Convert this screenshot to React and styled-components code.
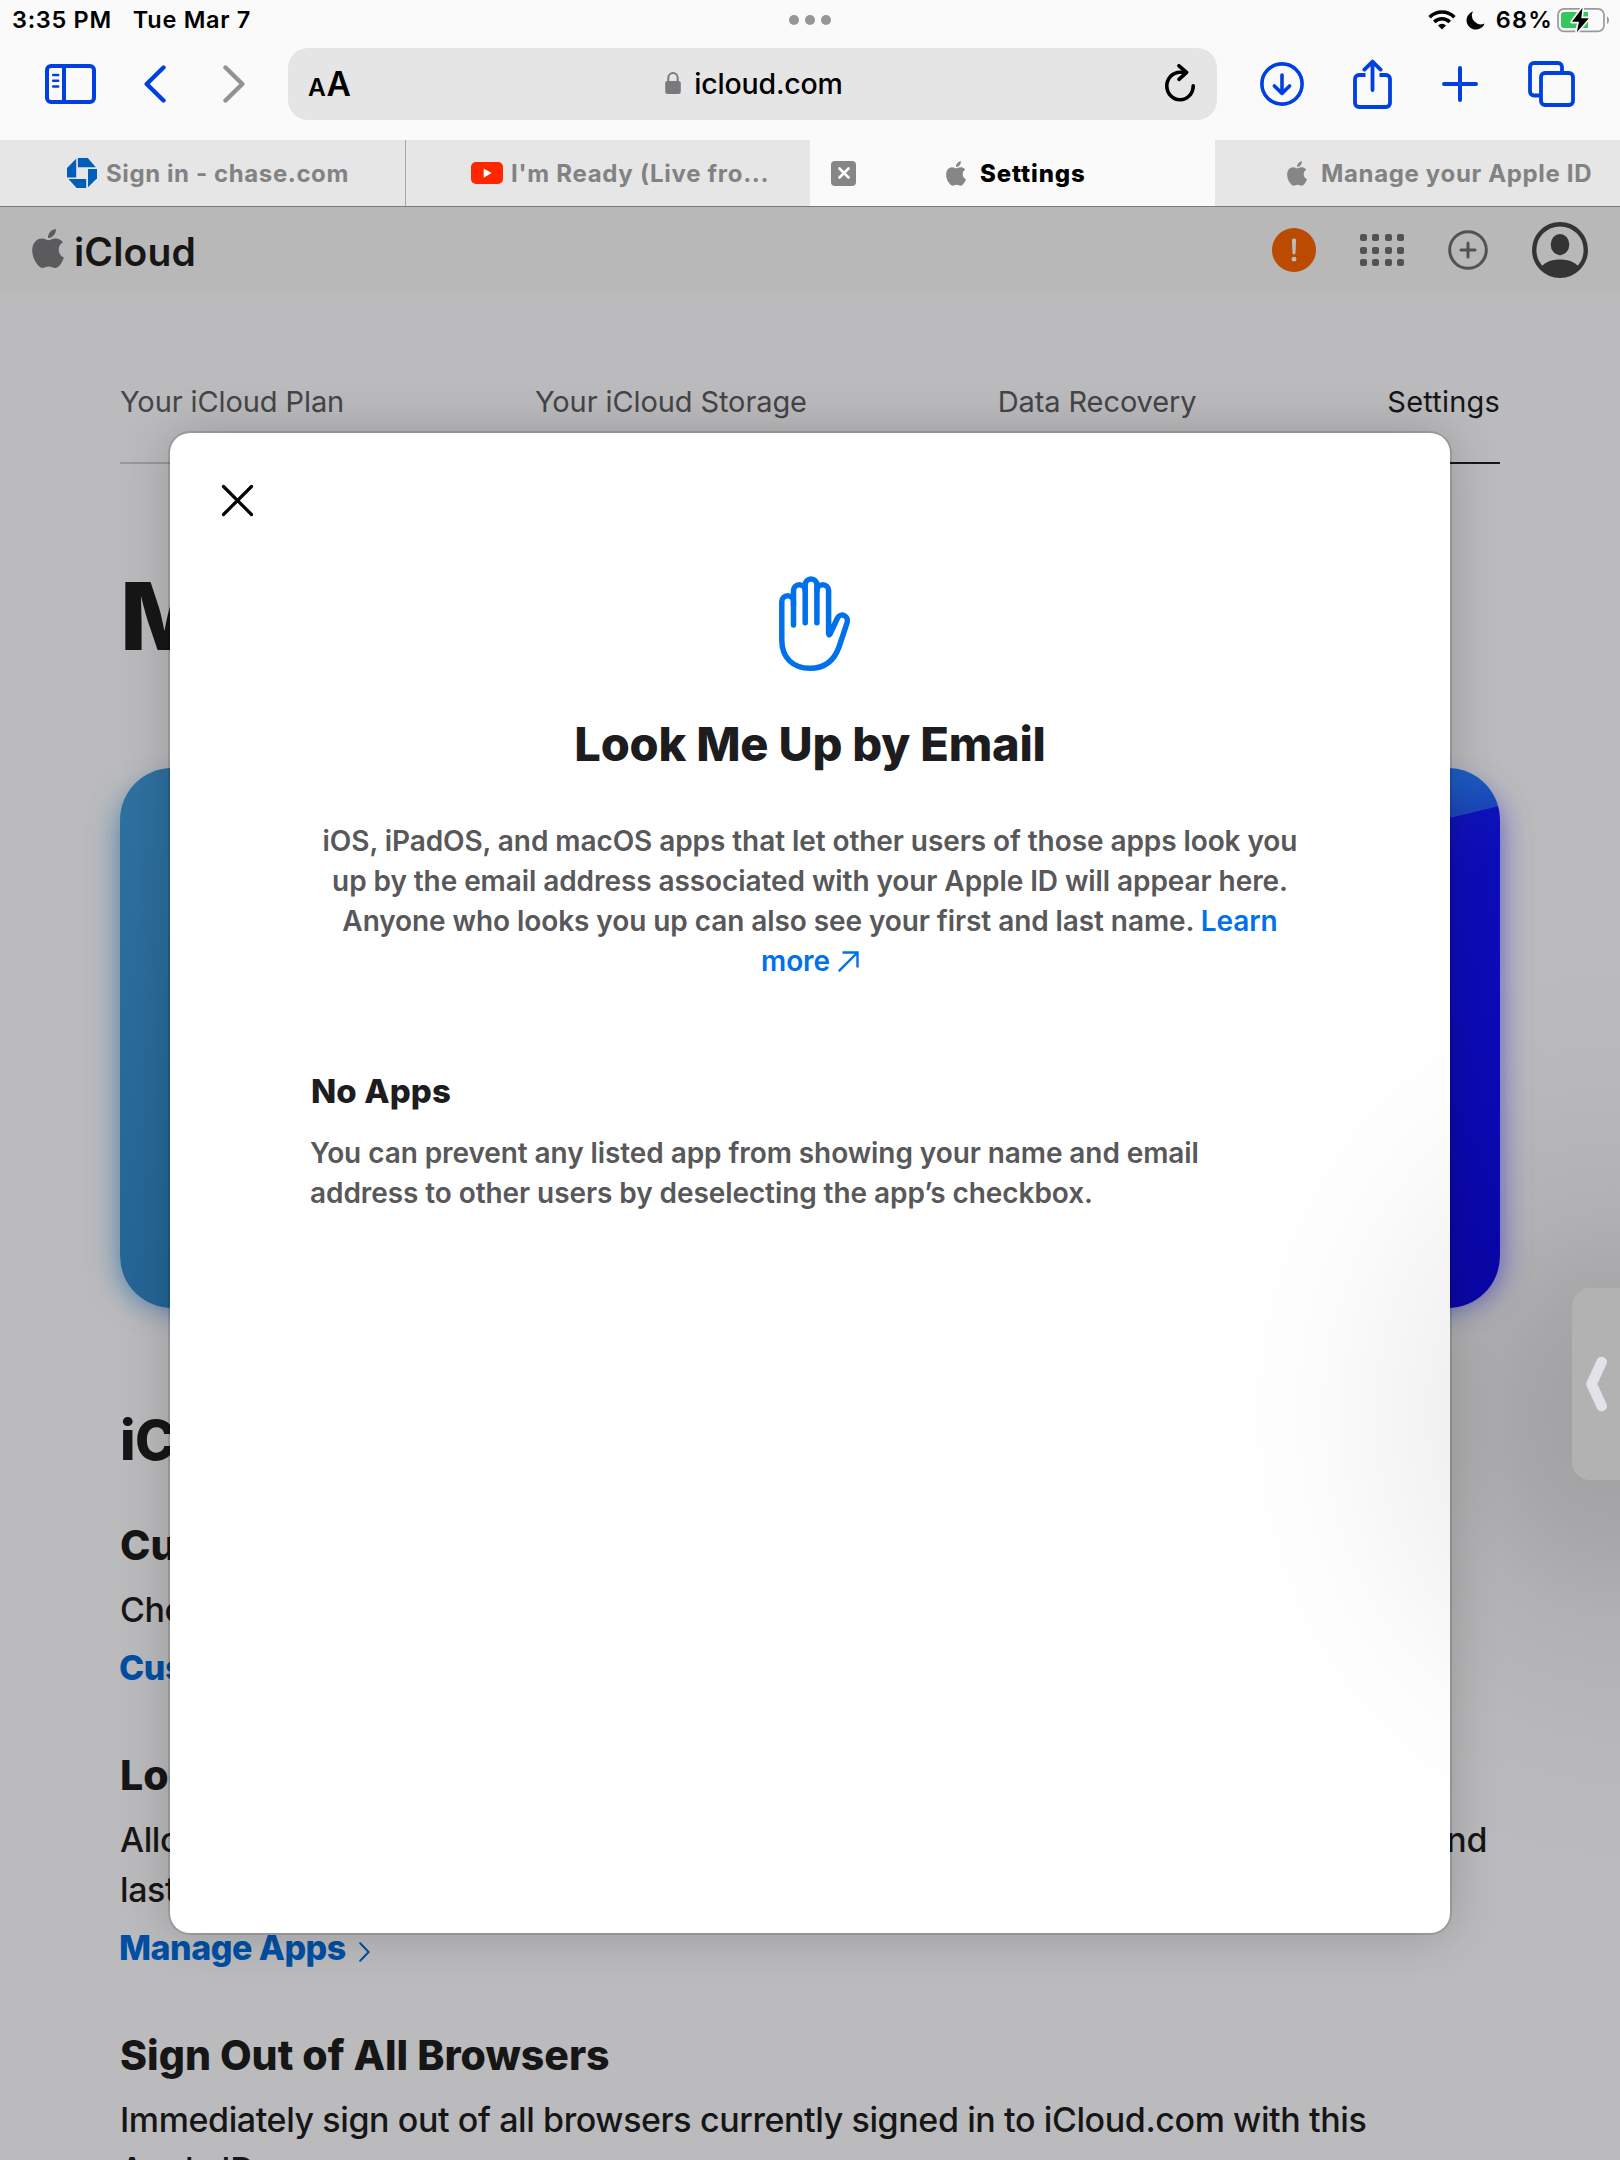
import React from "react";
import styled, { createGlobalStyle } from "styled-components";

const BLUE = "#0040e0";

const GlobalStyle = createGlobalStyle`
  *, *::before, *::after { box-sizing: border-box; }
  body {
    margin: 0;
    background: #bbbbbd;
    font-family: Inter, "Liberation Sans", sans-serif;
    color: #161617;
  }
  h1, h2, h3, p, ul { margin: 0; padding: 0; }
  svg { display: block; flex: none; }
`;

const Screen = styled.div`
  position: relative;
  width: 1620px;
  height: 2160px;
  overflow: hidden;
  display: flex;
  flex-direction: column;
`;

/* ---------- browser chrome ---------- */

const Chrome = styled.header`
  flex: none;
  height: 207px;
  background: #fafafa;
  border-bottom: 1px solid #7b7b7b;
`;

const StatusBar = styled.div`
  display: grid;
  grid-template-columns: 1fr auto 1fr;
  align-items: center;
  height: 40px;
  padding: 0 9px 0 12px;
`;

const StatusText = styled.span`
  font-size: 23.5px;
  font-weight: 600;
  line-height: 40px;
  color: #000;
  white-space: nowrap;
  letter-spacing: ${(p) => p.$track || 0.7}px;
`;

const StatusLeft = styled.div`
  display: flex;
  gap: 21px;
`;

const StatusRight = styled.div`
  display: flex;
  justify-content: flex-end;
  align-items: center;
`;

const Dots = styled.div`
  display: flex;
  gap: 6px;
  margin-left: -4px;
`;

const Dot = styled.i`
  width: 10px;
  height: 10px;
  border-radius: 50%;
  background: #969696;
`;

const Toolbar = styled.div`
  display: flex;
  align-items: flex-start;
  height: 100px;
  padding: 8px 45px 0;
`;

const ToolGroup = styled.div`
  display: flex;
  align-items: center;
  height: 72px;
`;

const ToolButton = styled.button`
  border: 0;
  padding: 0;
  background: none;
  color: ${(p) => p.$color || BLUE};
  margin-left: ${(p) => p.$gap || 0}px;
`;

const AddressBar = styled.div`
  flex: none;
  display: grid;
  grid-template-columns: 1fr auto 1fr;
  align-items: start;
  width: 929px;
  height: 72px;
  margin-left: 43px;
  padding: 0 22px 0 20px;
  border-radius: 20px;
  background: #e5e5e5;
`;

const TextSize = styled.div`
  color: #000;
  font-size: 33.5px;
  font-weight: 600;
  line-height: 73px;
  letter-spacing: -0.3px;
  small { font-size: 24.5px; margin-right: 1px; }
`;

const Host = styled.div`
  display: flex;
  align-items: center;
  gap: 13px;
  margin-left: 5px;
  font-size: 28.5px;
  font-weight: 500;
  line-height: 72px;
  letter-spacing: -0.2px;
  color: #000;
  svg { margin-bottom: 3px; }
`;

const ReloadSlot = styled.div`
  display: flex;
  justify-content: flex-end;
  padding-top: 16px;
`;

const TabStrip = styled.div`
  display: grid;
  grid-template-columns: repeat(4, 405px);
  height: 66px;
`;

const Tab = styled.div`
  display: flex;
  align-items: center;
  height: 66px;
  padding-left: ${(p) => p.$inset}px;
  background: ${(p) => (p.$active ? "#fafafa" : "#e6e6e6")};
  color: ${(p) => (p.$active ? "#000" : "#828284")};
  border-left: ${(p) => (p.$divider ? "1px solid #a9a9a9" : "0")};
`;

const TabTitle = styled.span`
  padding-top: 1px;
  font-size: 24px;
  font-weight: ${(p) => p.$weight || 700};
  line-height: 66px;
  white-space: nowrap;
  margin-left: ${(p) => p.$gap}px;
  letter-spacing: ${(p) => p.$track || 0.6}px;
`;

const CloseTab = styled.span`
  display: flex;
  align-items: center;
  justify-content: center;
  width: 25px;
  height: 25px;
  margin-right: 90px;
  border-radius: 4px;
  background: #868686;
`;

/* ---------- iCloud page ---------- */

const SiteHeader = styled.div`
  flex: none;
  display: flex;
  align-items: center;
  height: 86px;
  padding: 0 32px;
  background: #b8b8b8;
`;

const Brand = styled.div`
  display: flex;
  align-items: center;
  gap: 10px;
  margin-right: auto;
  padding-top: 3px;
  font-size: 39px;
  font-weight: 600;
  line-height: 80px;
  letter-spacing: 0.15px;
  svg { margin-bottom: 6px; }
`;

const SiteActions = styled.div`
  display: flex;
  align-items: center;
`;

const Action = styled.span`
  margin-left: ${(p) => p.$gap}px;
`;

const Alert = styled.span`
  display: flex;
  align-items: center;
  justify-content: center;
  width: 44px;
  height: 44px;
  border-radius: 50%;
  background: #ba4b00;
`;

const AppGrid = styled.div`
  display: grid;
  grid-template-columns: repeat(4, 7px);
  gap: 5.5px;
  i { height: 7px; border-radius: 2px; background: #525252; }
`;

const Page = styled.main`
  width: 1380px;
  margin: 0 auto;
`;

const Nav = styled.ul`
  display: flex;
  justify-content: space-between;
  margin-top: 87px;
  border-bottom: 2px solid #98989a;
  list-style: none;
`;

const NavItem = styled.li`
  height: 84px;
  margin-bottom: -2px;
  font-size: 29px;
  font-weight: 400;
  line-height: 44px;
  letter-spacing: ${(p) => (p.$active ? "0.2px" : "-0.1px")};
  color: ${(p) => (p.$active ? "#161617" : "#454547")};
  border-bottom: 2px solid ${(p) => (p.$active ? "#161617" : "transparent")};
`;

const Hero = styled.h1`
  margin: 96px 0;
  font-size: 94px;
  font-weight: 800;
  line-height: 112px;
`;

const Card = styled.div`
  height: 540px;
  border-radius: 52px;
  background:
    linear-gradient(166.5deg, #1f62c4 0, #1d5cc2 45px, #1b46ba 83px, transparent 84px) right top / 200px 120px no-repeat,
    linear-gradient(165deg, #1726b8 0%, #0d0dba 38%, #0a06b0 100%) right / 50% 100% no-repeat,
    linear-gradient(180deg, #2f71a0 0%, #246595 100%);
  box-shadow: -14px 8px 32px -16px rgba(20, 100, 160, 0.75), 14px 8px 32px -16px rgba(60, 50, 200, 0.8);
`;

const Section = styled.h2`
  margin: 100px 0 48px;
  font-size: 55px;
  font-weight: 800;
  line-height: 64px;
  letter-spacing: -0.5px;
`;

const Block = styled.section`
  margin-bottom: 62px;
  color: #161617;
`;

const BlockTitle = styled.h3`
  font-size: 41px;
  font-weight: 800;
  line-height: 50px;
  letter-spacing: 0;
  margin-bottom: 15px;
`;

const BlockText = styled.p`
  font-size: 34px;
  font-weight: 500;
  line-height: 50px;
  letter-spacing: -0.4px;
`;

const FullLine = styled.span`
  display: block;
  padding-right: 13px;
  text-align-last: justify;
`;

const BlockLink = styled.a`
  display: flex;
  align-items: center;
  gap: 13px;
  height: 40px;
  margin: 13px 0 0 -1px;
  font-size: 34px;
  font-weight: 800;
  line-height: 40px;
  letter-spacing: -0.5px;
  color: #004fa3;
  svg { margin-top: 7px; }
`;

/* ---------- dialog ---------- */

const Dialog = styled.div`
  position: absolute;
  left: 170px;
  top: 433px;
  width: 1280px;
  height: 1500px;
  padding: 51px 140px 0;
  border-radius: 20px;
  background: #fff;
  box-shadow: 0 0 0 2px rgba(0, 0, 0, 0.12), 0 0 50px rgba(0, 0, 0, 0.2);
`;

const CloseButton = styled.button`
  display: block;
  margin-left: -89px;
  padding: 0;
  border: 0;
  background: none;
`;

const HandSlot = styled.div`
  display: flex;
  justify-content: center;
  margin: 58px 0 0 8px;
`;

const DialogTitle = styled.h2`
  margin-top: 42px;
  font-size: 47px;
  font-weight: 800;
  line-height: 60px;
  letter-spacing: -0.2px;
  text-align: center;
  color: #1d1d1f;
`;

const DialogText = styled.p`
  margin-top: ${(p) => p.$top}px;
  font-size: 28px;
  font-weight: 600;
  line-height: 40px;
  letter-spacing: -0.08px;
  color: #58585a;
  text-align: ${(p) => (p.$center ? "center" : "left")};
  white-space: nowrap;
`;

const LearnMore = styled.a`
  color: #0071eb;
  svg { display: inline-block; margin-left: 8px; vertical-align: -1px; }
`;

const DialogHeading = styled.h3`
  margin: 88px 0 0 1px;
  font-size: 33px;
  font-weight: 800;
  line-height: 44px;
  letter-spacing: 0.1px;
  color: #1d1d1f;
`;

/* ---------- side handle ---------- */

const Shade = styled.div`
  position: absolute;
  right: 0;
  top: 884px;
  width: 420px;
  height: 1000px;
  pointer-events: none;
  background: radial-gradient(
    ellipse 410px 470px at 100% 53%,
    rgba(0, 0, 0, 0.15) 0%,
    rgba(0, 0, 0, 0.11) 25%,
    rgba(0, 0, 0, 0.05) 45%,
    rgba(0, 0, 0, 0.012) 75%,
    rgba(0, 0, 0, 0) 100%
  );
`;

const Handle = styled.div`
  position: absolute;
  right: 0;
  top: 1288px;
  display: flex;
  align-items: center;
  width: 48px;
  height: 192px;
  padding-left: 14px;
  border-radius: 18px 0 0 18px;
  background: #b2b2b2;
`;

/* ---------- icons ---------- */

const Apple = ({ w, h, color }) => (
  <svg width={w} height={h} viewBox="2.1 0 19.7 24" fill={color}>
    <path d="M12.152 6.896c-.948 0-2.415-1.078-3.96-1.04-2.04.027-3.91 1.183-4.961 3.014-2.117 3.675-.546 9.103 1.519 12.09 1.013 1.454 2.208 3.09 3.792 3.039 1.52-.065 2.09-.987 3.935-.987 1.831 0 2.35.987 3.96.948 1.637-.026 2.676-1.48 3.676-2.948 1.156-1.688 1.636-3.325 1.662-3.415-.039-.013-3.182-1.221-3.22-4.857-.026-3.04 2.48-4.494 2.597-4.559-1.429-2.09-3.623-2.324-4.39-2.376-2-.156-3.675 1.09-4.61 1.09zM15.53 3.83c.843-1.012 1.4-2.427 1.245-3.83-1.207.052-2.662.805-3.532 1.818-.78.896-1.454 2.338-1.273 3.714 1.338.104 2.715-.688 3.559-1.701" />
  </svg>
);

const Stroke = ({ w, h, sw = 4, children }) => (
  <svg width={w} height={h} viewBox={`0 0 ${w} ${h}`} fill="none" stroke="currentColor" strokeWidth={sw} strokeLinecap="round" strokeLinejoin="round">
    {children}
  </svg>
);

const Wifi = () => (
  <svg width="28" height="20" viewBox="0 0 28 20" fill="none" stroke="#000" strokeWidth="3.6">
    <path d="M1.6 7.2a17.5 17.5 0 0 1 24.8 0" />
    <path d="M6.3 12a10.8 10.8 0 0 1 15.4 0" />
    <path d="M14 19.6l-4-4.2a5.8 5.8 0 0 1 8 0z" fill="#000" stroke="none" />
  </svg>
);

const Moon = () => (
  <svg width="19" height="19" viewBox="0 0 19 19">
    <path d="M7 .4A9.3 9.3 0 1 0 18.6 12.4 8.8 8.8 0 0 1 7 .4z" fill="#000" />
  </svg>
);

const Battery = () => (
  <svg width="54" height="26" viewBox="0 0 54 26">
    <rect x="1" y="1.8" width="46" height="22.6" rx="6" fill="none" stroke="#9a9a9a" strokeWidth="1.7" />
    <path d="M50 9.5c2.6.7 2.6 6.6 0 7.4z" fill="#9a9a9a" />
    <path d="M7 5h24v16H7a3 3 0 0 1-3-3V8a3 3 0 0 1 3-3z" fill="#34c759" />
    <path d="M25.5.8L15 14.8h7l-2.2 10.400 12-14h-7.500z" fill="#000" stroke="#fafafa" strokeWidth="3.400" strokeLinejoin="round" paintOrder="stroke" />
  </svg>
);

const Chase = () => (
  <svg width="30" height="30" viewBox="0 0 30 30" fill="#005eb8">
    <path d="M10.9 0h9.9l8 9.3H10.9z" />
    <path d="M30 10.9v9.4l-9 9V10.9z" />
    <path d="M19.2 30H9.6L1.5 21h17.7z" />
    <path d="M0 19.4V10L9.2.8v18.6z" />
  </svg>
);

const YouTube = () => (
  <svg width="32" height="22" viewBox="0 0 32 22">
    <rect width="32" height="22" rx="5" fill="#ff2600" />
    <path d="M12.7 6.4v9.4l8-4.7z" fill="#fff" />
  </svg>
);

const Lock = () => (
  <svg width="16" height="22" viewBox="0 0 16 22">
    <path d="M3.3 10V6a4.7 4.9 0 0 1 9.4 0v4" fill="none" stroke="#79797e" strokeWidth="2" />
    <rect x="0.2" y="9" width="15.6" height="13" rx="2.2" fill="#79797e" />
  </svg>
);

export default function App() {
  return (
    <Screen>
      <GlobalStyle />

      <Chrome>
        <StatusBar>
          <StatusLeft>
            <StatusText>3:35 PM</StatusText>
            <StatusText>Tue Mar 7</StatusText>
          </StatusLeft>
          <Dots><Dot /><Dot /><Dot /></Dots>
          <StatusRight>
            <Wifi />
            <Action $gap={10}><Moon /></Action>
            <Action $gap={11}><StatusText $track={1.2}>68%</StatusText></Action>
            <Action $gap={4}><Battery /></Action>
          </StatusRight>
        </StatusBar>

        <Toolbar>
          <ToolGroup>
            <ToolButton>
              <Stroke w={51} h={40}>
                <rect x="2" y="2" width="47" height="36" rx="4" />
                <path d="M19 2v36" strokeLinecap="butt" />
                <path d="M8.2 11h5M8.2 16.7h5M8.2 22.4h5" strokeWidth="2.5" />
              </Stroke>
            </ToolButton>
            <ToolButton $gap={48}>
              <Stroke w={22} h={38} sw={4.4}><path d="M19.5 2.5L2.7 19l16.8 16.5" /></Stroke>
            </ToolButton>
            <ToolButton $gap={57} $color="#929294">
              <Stroke w={22} h={38} sw={4.4}><path d="M2.5 2.5L19.3 19 2.5 35.5" /></Stroke>
            </ToolButton>
          </ToolGroup>

          <AddressBar>
            <TextSize><small>A</small>A</TextSize>
            <Host><Lock />icloud.com</Host>
            <ReloadSlot>
              <ToolButton $color="#000">
                <Stroke w={30} h={38} sw={3.6}>
                  <path d="M28.2 21.8A13.2 13.8 0 1 1 15 8.2h6" />
                  <path d="M14 1.8l7.6 6.6-7.6 7" />
                </Stroke>
              </ToolButton>
            </ReloadSlot>
          </AddressBar>

          <ToolGroup>
            <ToolButton $gap={43}>
              <Stroke w={44} h={44} sw={3.6}>
                <circle cx="22" cy="22" r="20.1" />
                <path d="M22 13v18M14.4 24l7.6 7.4 7.6-7.4" />
              </Stroke>
            </ToolButton>
            <ToolButton $gap={49}>
              <Stroke w={39} h={50} sw={3.8}>
                <path d="M12.5 16H6a4 4 0 0 0-4 4v24a4 4 0 0 0 4 4h27a4 4 0 0 0 4-4V20a4 4 0 0 0-4-4h-6.5" strokeLinecap="butt" />
                <path d="M19.5 31V3M11.4 10.6l8.1-8 8.1 8" />
              </Stroke>
            </ToolButton>
            <ToolButton $gap={50}>
              <Stroke w={36} h={36}><path d="M18 2v32M2 18h32" /></Stroke>
            </ToolButton>
            <ToolButton $gap={50}>
              <Stroke w={47} h={46} sw={3.8}>
                <rect x="13" y="12" width="32" height="32" rx="4" />
                <path d="M12 34.5H6a4 4 0 0 1-4-4V6a4 4 0 0 1 4-4h24a4 4 0 0 1 4 4v5" strokeLinecap="butt" />
              </Stroke>
            </ToolButton>
          </ToolGroup>
        </Toolbar>

        <TabStrip>
          <Tab $inset={67}>
            <Chase /><TabTitle $gap={9}>Sign in - chase.com</TabTitle>
          </Tab>
          <Tab $inset={65} $divider>
            <YouTube /><TabTitle $gap={8} $track={0.7}>I'm Ready (Live fro...</TabTitle>
          </Tab>
          <Tab $inset={21} $active>
            <CloseTab>
              <svg width="12" height="12" viewBox="0 0 12 12" stroke="#fafafa" strokeWidth="2.6" strokeLinecap="round">
                <path d="M1.5 1.5l9 9M10.5 1.5l-9 9" />
              </svg>
            </CloseTab>
            <Apple w={20} h={25} color="#868686" /><TabTitle $gap={14} $weight={800} $track={0.85}>Settings</TabTitle>
          </Tab>
          <Tab $inset={72}>
            <Apple w={20} h={25} color="#868686" /><TabTitle $gap={14} $track={0.65}>Manage your Apple ID</TabTitle>
          </Tab>
        </TabStrip>
      </Chrome>

      <SiteHeader>
        <Brand><Apple w={32} h={39} color="#5b5b5d" />iCloud</Brand>
        <SiteActions>
          <Alert>
            <svg width="6" height="24" viewBox="0 0 6 24" fill="#bcbcbc">
              <path d="M.9 1.6Q3-.8 5.1 1.6L4.5 15.6Q3 17.4 1.5 15.6z" />
              <circle cx="3" cy="21.2" r="2.4" />
            </svg>
          </Alert>
          <Action $gap={44}>
            <AppGrid>{Array.from({ length: 12 }, (_, i) => <i key={i} />)}</AppGrid>
          </Action>
          <Action $gap={44}>
            <svg width="40" height="40" viewBox="0 0 40 40" fill="none" stroke="#525252" strokeWidth="3">
              <circle cx="20" cy="20" r="18.3" />
              <path d="M20 13v14M13 20h14" strokeLinecap="round" />
            </svg>
          </Action>
          <Action $gap={44}>
            <svg width="56" height="56" viewBox="0 0 56 56" fill="#343434">
              <circle cx="28" cy="28" r="25.8" fill="none" stroke="#343434" strokeWidth="4.4" />
              <ellipse cx="28" cy="22.6" rx="9.3" ry="10.6" />
              <path d="M9.5 44.5C14 39.5 21 37.6 28 37.6s14 1.9 18.5 6.9A26 26 0 0 1 9.5 44.5z" />
            </svg>
          </Action>
        </SiteActions>
      </SiteHeader>

      <Page>
        <Nav>
          <NavItem>Your iCloud Plan</NavItem>
          <NavItem>Your iCloud Storage</NavItem>
          <NavItem>Data Recovery</NavItem>
          <NavItem $active>Settings</NavItem>
        </Nav>
        <Hero>More Settings</Hero>
        <Card />
        <Section>iCloud Settings</Section>
        <Block>
          <BlockTitle>Customization</BlockTitle>
          <BlockText>Choose what appears on your homepage.</BlockText>
          <BlockLink>Customize</BlockLink>
        </Block>
        <Block>
          <BlockTitle>Look Me Up by Email</BlockTitle>
          <BlockText>
            <FullLine>Allow people to look you up by your email address and see your first and</FullLine>
            last name.
          </BlockText>
          <BlockLink>
            Manage Apps
            <svg width="11" height="20" viewBox="0 0 11 20" fill="none" stroke="#004fa3" strokeWidth="2" strokeLinecap="round">
              <path d="M1.2 1.2L9.6 10l-8.4 8.8" />
            </svg>
          </BlockLink>
        </Block>
        <Block>
          <BlockTitle>Sign Out of All Browsers</BlockTitle>
          <BlockText>
            Immediately sign out of all browsers currently signed in to iCloud.com with this
            <br />
            Apple ID.
          </BlockText>
        </Block>
      </Page>

      <Dialog>
        <CloseButton>
          <svg width="33" height="33" viewBox="0 0 33 33" stroke="#000" strokeWidth="3.2" strokeLinecap="round">
            <path d="M2.5 2.5l28 28M30.5 2.5l-28 28" />
          </svg>
        </CloseButton>
        <HandSlot>
          <svg width="73" height="97" viewBox="0 0 73 97" fill="none" stroke="#0071eb" strokeWidth="5.5" strokeLinecap="round" strokeLinejoin="round">
            <path d="M15.5 50V26.5A5.85 5.85 0 0 0 3.8 26.5V65C3.8 83 15 93.3 32 93.3C47 93.3 56 86 61 72L69 48C71.5 41 62.5 37 59.5 43L52 59Q50.6 61 50.6 58V15.5A5.85 5.85 0 0 0 38.9 15.5V47.7" />
            <path d="M38.9 16V9.8A5.85 5.85 0 0 0 27.2 9.8V47.7" />
            <path d="M27.2 15.5A5.85 5.85 0 0 0 15.5 15.5V30" />
          </svg>
        </HandSlot>
        <DialogTitle>Look Me Up by Email</DialogTitle>
        <DialogText $center $top={47}>
          iOS, iPadOS, and macOS apps that let other users of those apps look you<br />
          up by the email address associated with your Apple ID will appear here.<br />
          Anyone who looks you up can also see your first and last name. <LearnMore>Learn</LearnMore><br />
          <LearnMore>
            more
            <svg width="21" height="21" viewBox="0 0 21 21" fill="none" stroke="#0071eb" strokeWidth="2.4">
              <path d="M.8 20.2L19 2M4.5 1.5h15v15" />
            </svg>
          </LearnMore>
        </DialogText>
        <DialogHeading>No Apps</DialogHeading>
        <DialogText $top={20}>
          You can prevent any listed app from showing your name and email<br />
          address to other users by deselecting the app’s checkbox.
        </DialogText>
      </Dialog>

      <Shade />
      <Handle>
        <svg width="21" height="56" viewBox="0 0 21 56" fill="none" stroke="#e3e2e8" strokeWidth="10.5" strokeLinecap="round" strokeLinejoin="round">
          <path d="M15.7 6L5.5 28l10.2 22" />
        </svg>
      </Handle>
    </Screen>
  );
}
